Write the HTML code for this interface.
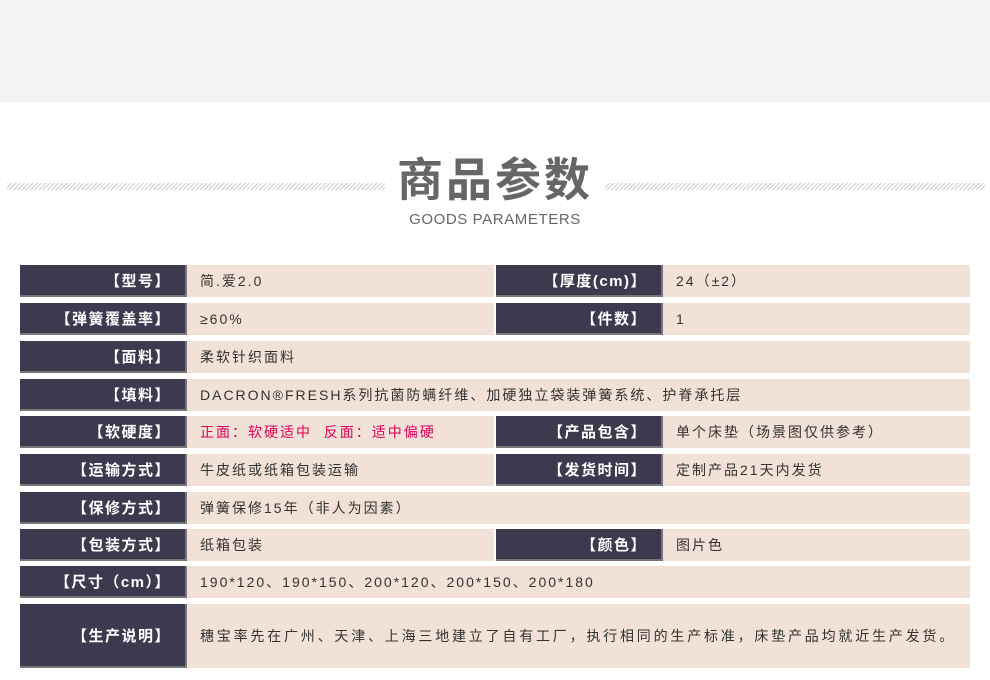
<!DOCTYPE html>
<html><head><meta charset="utf-8"><style>
*{margin:0;padding:0;box-sizing:border-box}
body{width:990px;height:680px;background:#fff;position:relative;overflow:hidden;font-family:"Liberation Sans","Noto Sans CJK SC",sans-serif}
.top{position:absolute;left:0;top:0;width:990px;height:102px;background:#f3f2f2}
.hatch{position:absolute;top:183px;height:7px;background:repeating-linear-gradient(135deg,#ccc 0 1px,#fff 1px 3px)}
.title{position:absolute;left:0;width:990px;text-align:center;top:150px;font-size:46px;color:#666;letter-spacing:3px;line-height:60px;font-weight:bold}
.sub{position:absolute;left:0;width:990px;text-align:center;top:211px;font-size:15px;color:#666;line-height:18px;letter-spacing:0.6px}
.l,.v{position:absolute;font-size:14px;display:flex;align-items:center}
.l{background:#3d3a4f;color:#fff;justify-content:flex-end;padding-right:14px;font-weight:bold;font-size:15px;letter-spacing:1.5px;border-right:2px solid #777;border-bottom:2px solid #777}
.v{background:#f1e1d6;color:#333;padding-left:13px;letter-spacing:2px}
.r{color:#e0005a}
</style></head><body>
<div class="top"></div>
<div class="hatch" style="left:7px;width:378px"></div>
<div class="hatch" style="left:605px;width:380px"></div>
<div class="title">商品参数</div>
<div class="sub">GOODS PARAMETERS</div>

<div class="l" style="left:20px;top:265px;width:167px;height:32px">【型号】</div>
<div class="v" style="left:187px;top:265px;width:307px;height:32px">简.爱2.0</div>
<div class="l" style="left:496px;top:265px;width:167px;height:32px">【厚度(cm)】</div>
<div class="v" style="left:663px;top:265px;width:307px;height:32px">24（±2）</div>

<div class="l" style="left:20px;top:303px;width:167px;height:32px">【弹簧覆盖率】</div>
<div class="v" style="left:187px;top:303px;width:307px;height:32px">≥60%</div>
<div class="l" style="left:496px;top:303px;width:167px;height:32px">【件数】</div>
<div class="v" style="left:663px;top:303px;width:307px;height:32px">1</div>

<div class="l" style="left:20px;top:341px;width:167px;height:32px">【面料】</div>
<div class="v" style="left:187px;top:341px;width:783px;height:32px">柔软针织面料</div>

<div class="l" style="left:20px;top:379px;width:167px;height:32px">【填料】</div>
<div class="v" style="left:187px;top:379px;width:783px;height:32px">DACRON®FRESH系列抗菌防螨纤维、加硬独立袋装弹簧系统、护脊承托层</div>

<div class="l" style="left:20px;top:416px;width:167px;height:32px">【软硬度】</div>
<div class="v" style="left:187px;top:416px;width:307px;height:32px"><span class="r">正面：软硬适中&nbsp;&nbsp;反面：适中偏硬</span></div>
<div class="l" style="left:496px;top:416px;width:167px;height:32px">【产品包含】</div>
<div class="v" style="left:663px;top:416px;width:307px;height:32px">单个床垫（场景图仅供参考）</div>

<div class="l" style="left:20px;top:454px;width:167px;height:32px">【运输方式】</div>
<div class="v" style="left:187px;top:454px;width:307px;height:32px">牛皮纸或纸箱包装运输</div>
<div class="l" style="left:496px;top:454px;width:167px;height:32px">【发货时间】</div>
<div class="v" style="left:663px;top:454px;width:307px;height:32px">定制产品21天内发货</div>

<div class="l" style="left:20px;top:492px;width:167px;height:32px">【保修方式】</div>
<div class="v" style="left:187px;top:492px;width:783px;height:32px">弹簧保修15年（非人为因素）</div>

<div class="l" style="left:20px;top:529px;width:167px;height:32px">【包装方式】</div>
<div class="v" style="left:187px;top:529px;width:307px;height:32px">纸箱包装</div>
<div class="l" style="left:496px;top:529px;width:167px;height:32px">【颜色】</div>
<div class="v" style="left:663px;top:529px;width:307px;height:32px">图片色</div>

<div class="l" style="left:20px;top:566px;width:167px;height:32px">【尺寸（cm）】</div>
<div class="v" style="left:187px;top:566px;width:783px;height:32px">190*120、190*150、200*120、200*150、200*180</div>

<div class="l" style="left:20px;top:604px;width:167px;height:64px">【生产说明】</div>
<div class="v" style="left:187px;top:604px;width:783px;height:64px;letter-spacing:2.8px">穗宝率先在广州、天津、上海三地建立了自有工厂，执行相同的生产标准，床垫产品均就近生产发货。</div>
</body></html>
